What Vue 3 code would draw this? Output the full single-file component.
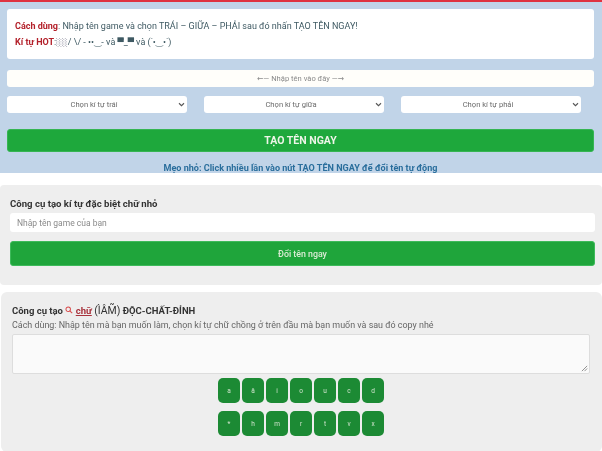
<script setup>
const row1 = ['a', 'ă', 'i', 'o', 'u', 'c', 'd']
const row2 = ['*', 'h', 'm', 'r', 't', 'v', 'x']
</script>

<template>
  <div class="page">
    <section class="hero">
      <div class="note">
        <p class="line1"><b class="red">Cách dùng</b>: Nhập tên game và chọn TRÁI – GIỮA – PHẢI sau đó nhấn TẠO TÊN NGAY!</p>
        <p class="line2"><b class="red">Kí tự HOT</b>:<span class="shade">░░</span>/ \/ - ••‿- và <span class="block">▀̿</span>_<span class="block">▀̿</span> và (˙•‿•˙)</p>
      </div>
      <input class="name" placeholder="←— Nhập tên vào đây —→" />
      <div class="selects">
        <div class="sel">Chọn kí tự trái<svg class="chev" viewBox="0 0 8 6"><path d="M1 1.5l3 3 3-3" /></svg></div>
        <div class="sel">Chọn kí tự giữa<svg class="chev" viewBox="0 0 8 6"><path d="M1 1.5l3 3 3-3" /></svg></div>
        <div class="sel">Chọn kí tự phải<svg class="chev" viewBox="0 0 8 6"><path d="M1 1.5l3 3 3-3" /></svg></div>
      </div>
      <button class="make">TẠO TÊN NGAY</button>
      <p class="tip">Mẹo nhỏ: Click nhiều lần vào nút TẠO TÊN NGAY để đổi tên tự động</p>
    </section>

    <section class="panel small">
      <h3>Công cụ tạo kí tự đặc biệt chữ nhỏ</h3>
      <input class="game" placeholder="Nhập tên game của bạn" />
      <button class="change">Đổi tên ngay</button>
    </section>

    <section class="panel tall">
      <h3 class="title2">Công cụ tạo <svg class="lens" viewBox="0 0 10 10"><circle cx="4" cy="4" r="2.8" /><path d="M6 6l3 3" /></svg> <span class="word">chữ</span> <span class="thin">(ÌÂM̃)</span> ĐỘC-CHẤT-ĐỈNH</h3>
      <p class="usage">Cách dùng: Nhập tên mà bạn muốn làm, chọn kí tự chữ chồng ở trên đầu mà bạn muốn và sau đó copy nhé</p>
      <div class="area"><svg class="grip" viewBox="0 0 8 8"><path d="M1 7l6-6M4 7l3-3" /></svg></div>
      <div class="keys">
        <span v-for="k in row1" :key="k" class="key">{{ k }}</span>
      </div>
      <div class="keys">
        <span v-for="k in row2" :key="k" class="key">{{ k }}</span>
      </div>
    </section>
  </div>
</template>

<style>
html, body { margin: 0; padding: 0; background: #fff; overflow: hidden; }
</style>

<style scoped>
.page {
  width: 602px;
  height: 451px;
  overflow: hidden;
  background: #fff;
  font-family: Roboto, "DejaVu Sans", "Liberation Sans", sans-serif;
  display: flex;
  flex-direction: column;
  filter: blur(0.45px);
}
p, h3 { margin: 0; }
input, button { font-family: inherit; box-sizing: border-box; border: 0; outline: 0; display: block; }
.hero {
  height: 173px;
  box-sizing: border-box;
  flex: none;
  background: #c1d4e8;
  border-top: 2px solid #df3340;
  padding: 7px 8px 0 7px;
}
.note {
  height: 50px;
  box-sizing: border-box;
  background: #fff;
  border-radius: 3px;
  padding: 10px 8px 0;
  font-size: 9px;
  color: #3f5a63;
}
.line1 { line-height: 15px; }
.line2 { line-height: 15px; margin-top: 1px; white-space: nowrap; }
.red { color: #b3202a; }
.shade { font-size: 7.5px; color: #889; }
.block { font-size: 8px; }
.name {
  width: 100%;
  height: 17px;
  margin-top: 11px;
  background: #fffefa;
  border-radius: 3px;
  text-align: center;
  font-size: 7.6px;
}
.name::placeholder { color: #8a8a8a; opacity: 1; }
.selects {
  display: flex;
  gap: 17px;
  margin-top: 9px;
}
.sel {
  width: 180px;
  height: 17px;
  box-sizing: border-box;
  padding-right: 6px;
  position: relative;
  background: #fff;
  border-radius: 3px;
  text-align: center;
  font-size: 7.6px;
  line-height: 17px;
  color: #6b6b6b;
}
.chev {
  position: absolute;
  right: 2px;
  top: 6px;
  width: 7px;
  height: 5px;
  fill: none;
  stroke: #555;
  stroke-width: 1.3;
}
.make {
  width: 100%;
  height: 23px;
  margin-top: 16px;
  background: #1ea83c;
  border: 1px solid #36b552;
  border-radius: 3px;
  color: #eef5e8;
  font-size: 10.5px;
  font-weight: 700;
}
.tip {
  margin-top: 9px;
  text-align: center;
  font-size: 9.05px;
  font-weight: 700;
  line-height: 14px;
  color: #2a6e9c;
}
.panel {
  background: #eeeeee;
  box-sizing: border-box;
  flex: none;
  border-radius: 4px;
  margin-top: 12px;
}
.small {
  height: 100px;
  padding: 13px 7px 0 10px;
}
h3 {
  font-size: 9.6px;
  font-weight: 700;
  line-height: 12px;
  color: #333;
}
.game {
  width: 100%;
  height: 19px;
  margin-top: 3px;
  background: #fff;
  border-radius: 3px;
  padding: 0 7px;
  font-size: 8.5px;
}
.game::placeholder { color: #8a8a8a; opacity: 1; }
.change {
  width: 100%;
  height: 25px;
  margin-top: 9px;
  background: #1fa53b;
  border: 1px solid #3dba5a;
  border-radius: 3px;
  color: #dcecd6;
  font-size: 8.8px;
  font-weight: 500;
}
.tall {
  margin: 7px 0 0 1px;
  height: 160px;
  padding: 12px 12px 0 11px;
  border-radius: 6px;
}
.title2 { line-height: 13px; white-space: nowrap; font-size: 9.5px; }
.lens {
  width: 8px;
  height: 8px;
  fill: none;
  stroke: #d84a4a;
  stroke-width: 1.3;
}
.word {
  color: #a8323c;
  text-decoration: underline;
}
.thin { font-weight: 400; font-size: 10.5px; }
.usage {
  margin-top: 2px;
  font-size: 8.93px;
  line-height: 13px;
  color: #666;
  white-space: nowrap;
}
.area {
  height: 38px;
  margin: 2px 0 0;
  background: #fafafa;
  border: 1px solid #ddd;
  border-radius: 2px;
  position: relative;
}
.grip {
  position: absolute;
  right: 1px;
  bottom: 1px;
  width: 7px;
  height: 7px;
  fill: none;
  stroke: #666;
  stroke-width: 0.8;
}
.keys {
  display: flex;
  justify-content: center;
  gap: 2.5px;
  margin-top: 4px;
}
.keys + .keys { margin-top: 8px; }
.key {
  width: 21.5px;
  height: 25px;
  background: #1c8a34;
  border-radius: 5px;
  display: flex;
  align-items: center;
  justify-content: center;
  font-size: 6.5px;
  color: #cfe3cc;
}
</style>
